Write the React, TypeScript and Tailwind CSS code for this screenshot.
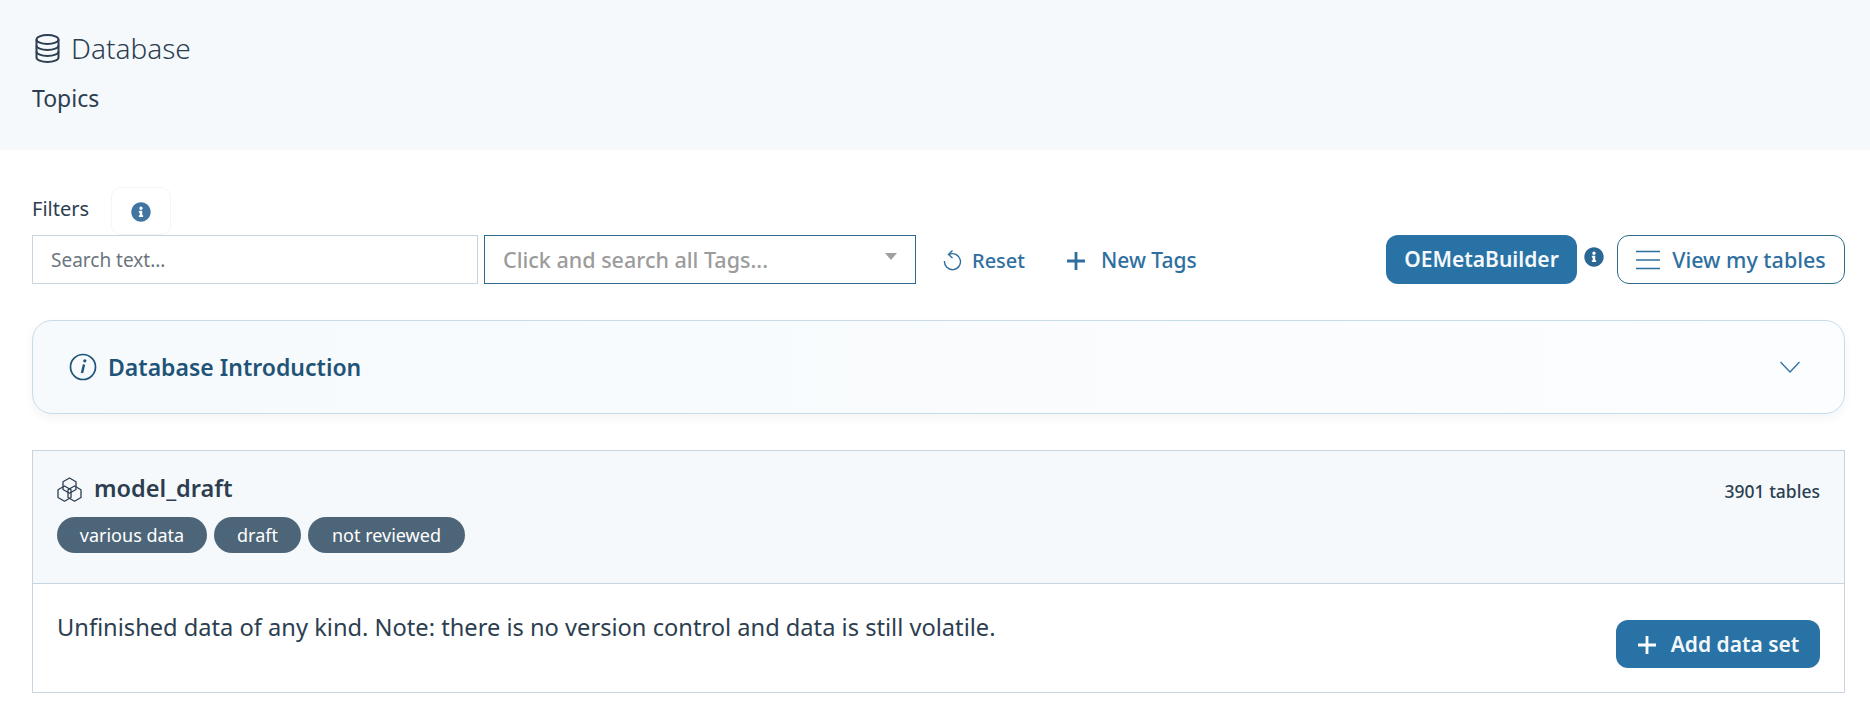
import React from "react";
import { FaInfoCircle } from "react-icons/fa";

function DbIcon() {
  return (
    <svg width="25" height="29" viewBox="0 0 25 29" fill="none" stroke="#2c3e50" strokeWidth="2">
      <ellipse cx="12.500" cy="5.500" rx="11" ry="4.500" />
      <path d="M1.500 5.500v18c0 2.500 4.900 4.500 11 4.500s11-2 11-4.500v-18" />
      <path d="M1.500 11.500c0 2.500 4.900 4.500 11 4.500s11-2 11-4.500" />
      <path d="M1.500 17.500c0 2.500 4.900 4.500 11 4.500s11-2 11-4.500" />
    </svg>
  );
}

function HexIcon() {
  return (
    <svg className="mt-[3px]" width="25" height="25" viewBox="0 0 25 25" fill="none" stroke="#2c3e50" strokeWidth="1.300" strokeLinejoin="round">
      <path d="M12.500 1l6.500 3.700v7.800l-6.500 3.700L6 12.500V4.700z" />
      <path d="M7.500 9l6.500 3.700v7.800L7.500 24.200 1 20.500v-7.800z" />
      <path d="M17.500 9l6.500 3.700v7.800l-6.500 3.700L11 20.500v-7.800z" />
    </svg>
  );
}

function Plus({ color, size = 20 }: { color: string; size?: number }) {
  return (
    <svg width={size} height={size} viewBox="0 0 20 20" fill="none" stroke={color} strokeWidth="2.800">
      <path d="M10 1v18M1 10h18" />
    </svg>
  );
}

export default function App() {
  return (
    <div className="min-h-[714px] overflow-hidden bg-white font-['Noto_Sans',sans-serif] text-[#2c3e50]">
      <header className="h-[150px] bg-[#f5f9fc] pl-8 pr-[25px] pt-[30px]">
        <div className="flex h-[36px] items-center gap-[11px] pl-[3px]">
          <DbIcon />
          <h1 className="text-[28px] leading-[36px] font-light">Database</h1>
        </div>
        <p className="mt-[16px] text-[23px] leading-[32px]">Topics</p>
      </header>

      <main className="pl-8 pr-[25px]">
        <div className="mt-[36px] flex h-[49px] items-center">
          <span className="mt-[-4px] text-[20px] leading-[24px]">Filters</span>
          <span className="ml-[22px] flex h-[48px] w-[60px] items-center justify-center rounded-[10px] border border-[#f3f6f9]">
            <FaInfoCircle className="mt-[2px] text-[#3f75a0]" size={20} />
          </span>
        </div>

        <div className="flex h-[49px] items-center">
          <div className="flex h-full w-[446px] items-center border border-[#c8d4e0] pl-[18px] pt-[2px] text-[19px] text-[#6c757d]">Search text...</div>
          <div className="ml-[6px] flex h-full w-[432px] items-center justify-between border border-[#2f6a8c] pl-[18px] pr-[18px] pt-[2px] text-[21.500px] font-medium text-[#9c9c9c]">
            <span>Click and search all Tags...</span>
            <span className="mb-[8px] h-0 w-0 border-x-[6px] border-t-[7px] border-x-transparent border-t-[#a0a0a0]" />
          </div>
          <button className="ml-[26px] flex items-center gap-[10px] pt-[2px] text-[20px] font-medium text-[#2f6f9f]">
            <svg width="20" height="24" viewBox="0 0 20 24" fill="none" stroke="#2f6f9f" strokeWidth="1.400">
              <path d="M7 5.500A8 8 0 1 1 2.500 12" />
              <path d="M10.500 1.500L6.500 5.500l4 3.500" />
            </svg>
            Reset
          </button>
          <button className="ml-[41px] flex items-center gap-[15px] pt-[2px] text-[21px] font-medium text-[#2f6f9f]">
            <Plus color="#2f6f9f" />
            New Tags
          </button>
          <div className="ml-auto flex h-full items-start">
            <button className="flex h-full w-[191px] items-center justify-center rounded-[12px] bg-[#2972a5] pt-[1px] text-[21px] font-semibold text-[#f4f8fb]">OEMetaBuilder</button>
            <FaInfoCircle className="ml-[7px] mt-[12px] text-[#2a6795]" size={20} />
            <button className="ml-[13px] flex h-full w-[228px] items-center justify-center gap-[12px] rounded-[12px] border border-[#2f6a8c] pt-[1px] text-[21.500px] font-medium text-[#2f6f9f]">
              <svg width="24" height="20" viewBox="0 0 24 20" fill="none" stroke="#2f6f9f" strokeWidth="1.300">
                <path d="M0 1.500h24M0 10h24M0 18.500h24" />
              </svg>
              View my tables
            </button>
          </div>
        </div>

        <section className="mt-[36px] flex h-[94px] items-center justify-between rounded-[20px] border border-[#c7dbe9] bg-gradient-to-r from-[#f6fafc] to-[#fcfdff] pl-[36px] pr-[44px] shadow-[0_4px_8px_rgba(44,62,80,0.06)]">
          <div className="flex items-center gap-[11px]">
            <svg width="28" height="28" viewBox="0 0 28 28" fill="none" stroke="#1f5478" strokeWidth="1.700">
              <circle cx="14" cy="14" r="12.500" />
              <path d="M15 11.500l-2 8.500" strokeWidth="2.400" />
              <circle cx="15.800" cy="7.800" r="1.600" fill="#1f5478" stroke="none" />
            </svg>
            <h2 className="text-[23px] font-semibold text-[#1f5478]">Database Introduction</h2>
          </div>
          <svg width="20" height="12" viewBox="0 0 20 12" fill="none" stroke="#2f6f9f" strokeWidth="1.300">
            <path d="M0.500 1l9.500 10L19.500 1" />
          </svg>
        </section>

        <section className="mt-[36px] border border-[#c8d4e0]">
          <div className="flex h-[133px] justify-between border-b border-[#c8d4e0] bg-[#f5f9fc] px-[24px]">
            <div>
              <div className="mt-[21px] flex h-[32px] items-center gap-[12px]">
                <HexIcon />
                <h3 className="text-[23.500px] leading-[32px] font-semibold text-[#2c3e50]">model_draft</h3>
              </div>
              <div className="mt-[13px] flex gap-[7px]">
                <span className="flex h-[36px] w-[150px] items-center justify-center rounded-full bg-[#4d6578] text-[18px] text-white">various data</span>
                <span className="flex h-[36px] w-[87px] items-center justify-center rounded-full bg-[#4d6578] text-[18px] text-white">draft</span>
                <span className="flex h-[36px] w-[157px] items-center justify-center rounded-full bg-[#4d6578] text-[18px] text-white">not reviewed</span>
              </div>
            </div>
            <span className="mt-[28px] text-[17.500px] leading-[24px] font-medium">3901 tables</span>
          </div>
          <div className="flex h-[108px] justify-between px-[24px]">
            <p className="mt-[27px] text-[23.650px] leading-[32px]">Unfinished data of any kind. Note: there is no version control and data is still volatile.</p>
            <button className="mt-[36px] flex h-[48px] w-[204px] items-center justify-center gap-[14px] rounded-[12px] bg-[#2972a5] pt-[1px] text-[21px] font-semibold text-[#f4f8fb]">
              <Plus color="#ffffff" />
              Add data set
            </button>
          </div>
        </section>
      </main>
    </div>
  );
}
